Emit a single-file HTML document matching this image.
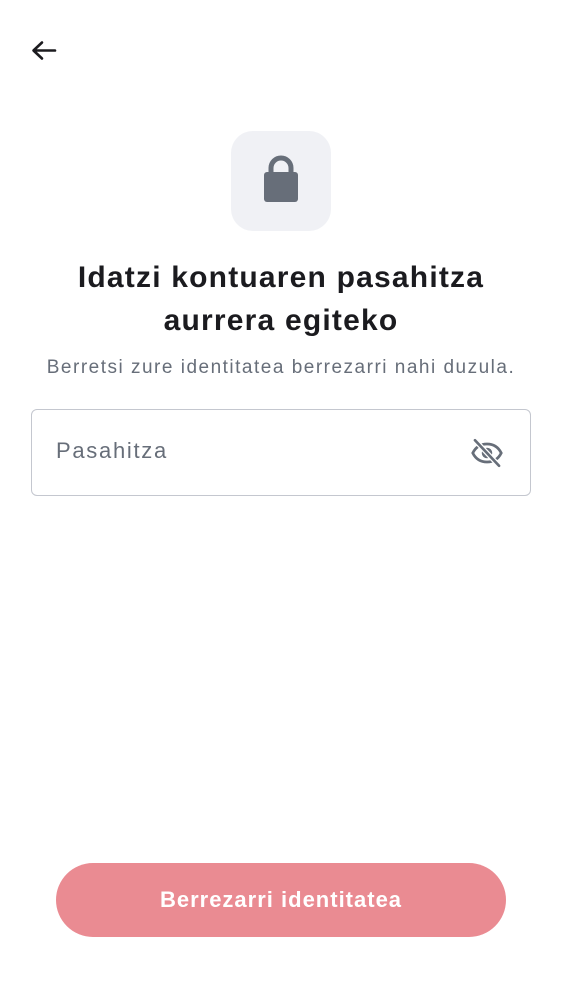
<!DOCTYPE html>
<html><head><meta charset="utf-8"><style>
body{margin:0;width:562px;height:1000px;background:#fff;font-family:"Liberation Sans",sans-serif;position:relative;overflow:hidden}
.a{position:absolute}
</style></head><body>
<svg class="a" style="left:28px;top:36px" width="30" height="30" viewBox="0 0 30 30"><path d="M27 14.5H6M14 6.5L5.5 14.5L14 22.5" stroke="#1c1b1f" stroke-width="2.6" fill="none" stroke-linecap="round" stroke-linejoin="round"/></svg>
<div class="a" style="left:231px;top:131px;width:100px;height:100px;border-radius:22px;background:#f0f1f5"></div>
<svg class="a" style="left:231px;top:131px" width="100" height="100" viewBox="0 0 100 100"><path d="M40 42V37a10 10 0 0 1 20 0v5" stroke="#676e79" stroke-width="5" fill="none"/><rect x="33" y="41" width="34" height="30" rx="3" fill="#676e79"/></svg>
<div class="a" style="left:0;width:562px;top:256px;text-align:center;font-size:30px;letter-spacing:1.2px;font-weight:bold;color:#1b1b1f;line-height:43px">Idatzi kontuaren pasahitza<br>aurrera egiteko</div>
<div class="a" style="left:0;width:562px;top:357px;text-align:center;font-size:19px;letter-spacing:1.5px;color:#676e79">Berretsi zure identitatea berrezarri nahi duzula.</div>
<div class="a" style="left:31px;top:409px;width:500px;height:87px;border:1.5px solid #c4c7cf;border-radius:6px;box-sizing:border-box"></div>
<div class="a" style="left:56px;top:438px;font-size:22px;letter-spacing:1.7px;color:#676e79">Pasahitza</div>
<svg class="a" style="left:469px;top:435px" width="36" height="36" viewBox="0 0 24 24"><path d="M2.5 12C4.5 8 8 6 12 6s7.5 2 9.5 6c-2 4-5.5 6-9.5 6s-7.5-2-9.5-6z" stroke="#676e79" stroke-width="1.8" fill="none"/><circle cx="12" cy="12" r="3.5" fill="#676e79"/><path d="M4 3.5L20 20.5" stroke="#fff" stroke-width="3.5"/><path d="M4 3.5L20 20.5" stroke="#676e79" stroke-width="1.8" stroke-linecap="round"/></svg>
<div class="a" style="left:56px;top:863px;width:450px;height:74px;border-radius:37px;background:#ea8b92;color:#fff;font-size:22px;letter-spacing:1px;font-weight:bold;text-align:center;line-height:74px">Berrezarri identitatea</div>
</body></html>
